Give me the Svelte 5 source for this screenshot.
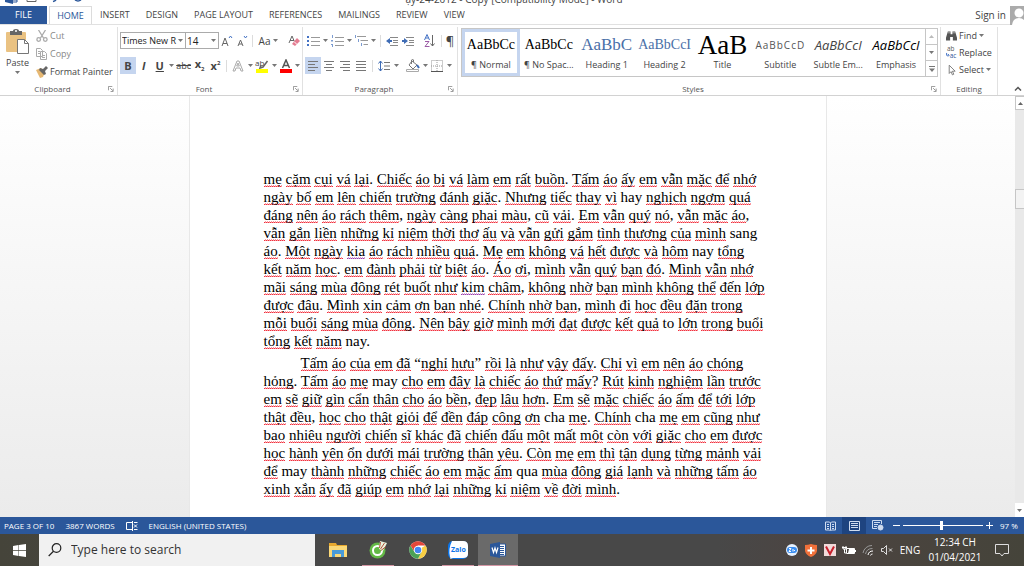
<script>
	const tabs = [
		'INSERT',
		'DESIGN',
		'PAGE LAYOUT',
		'REFERENCES',
		'MAILINGS',
		'REVIEW',
		'VIEW'
	];

	const styles = [
		{ name: '¶ Normal', sample: 'AaBbCc', kind: 'serif' },
		{ name: '¶ No Spac...', sample: 'AaBbCc', kind: 'serif' },
		{ name: 'Heading 1', sample: 'AaBbC', kind: 'heading-one' },
		{ name: 'Heading 2', sample: 'AaBbCcI', kind: 'heading-two' },
		{ name: 'Title', sample: 'AaB', kind: 'title' },
		{ name: 'Subtitle', sample: 'AaBbCcD', kind: 'subtitle' },
		{ name: 'Subtle Em...', sample: 'AaBbCcI', kind: 'subtle' },
		{ name: 'Emphasis', sample: 'AaBbCcI', kind: 'emphasis' }
	];

	const paragraphs = [
		[
			'mẹ cặm cụi vá lại. Chiếc áo bị vá làm em rất buồn. Tấm áo ấy em vẫn mặc để nhớ',
			'ngày bố em lên chiến trường đánh giặc. Nhưng tiếc thay vì hay nghịch ngợm quá',
			'đáng nên áo rách thêm, ngày càng phai màu, cũ vải. Em vẫn quý nó, vẫn mặc áo,',
			'vẫn gắn liền những kỉ niệm thời thơ ấu và vẫn gửi gắm tình thương của mình sang',
			'áo. Một ngày kia áo rách nhiều quá. Mẹ em không vá hết được và hôm nay tổng',
			'kết năm học. em đành phải từ biệt áo. Áo ơi, mình vẫn quý bạn đó. Mình vẫn nhớ',
			'mãi sáng mùa đông rét buốt như kim châm, không nhờ bạn mình không thể đến lớp',
			'được đâu. Mình xin cảm ơn bạn nhé. Chính nhờ bạn, mình đi học đều đặn trong',
			'mỗi buổi sáng mùa đông. Nên bây giờ mình mới đạt được kết quả to lớn trong buổi',
			'tổng kết năm nay.'
		],
		[
			'Tấm áo của em đã “nghỉ hưu” rồi là như vậy đấy. Chỉ vì em nên áo chóng',
			'hỏng. Tấm áo mẹ may cho em đây là chiếc áo thứ mấy? Rút kinh nghiệm lần trước',
			'em sẽ giữ gìn cẩn thân cho áo bền, đẹp lâu hơn. Em sẽ mặc chiếc áo ấm để tới lớp',
			'thật đều, học cho thật giỏi để đền đáp công ơn cha mẹ. Chính cha mẹ em cũng như',
			'bao nhiêu người chiến sĩ khác đã chiến đấu một mất một còn với giặc cho em được',
			'học hành yên ổn dưới mái trường thân yêu. Còn mẹ em thì tận dụng từng mảnh vải',
			'để may thành những chiếc áo em mặc ấm qua mùa đông giá lạnh và những tấm áo',
			'xinh xắn ấy đã giúp em nhớ lại những kỉ niệm về đời mình.'
		]
	];

	// words the spelling checker accepts
	const known = ['hay', 'sang', 'nay', 'to', 'may', 'cha', 'qua'];

	// split a line in words and the punctuation and spaces between them
	const getParts = (line) =>
		line.split(/([\p{L}]+)/u).map((text) => ({
			text,
			wrong: /\p{L}/u.test(text) && !known.includes(text),
			grammar: text === 'kia' || text === 'kim'
		}));

	let selectedStyle = $state('¶ Normal');
	let fontName = $state('Times New R');
	let fontSize = $state('14');
	let search = $state('');
	let zoom = $state(97);
</script>

{#snippet arrow()}
	<svg class="arrow" width="5" height="3" viewBox="0 0 5 3"><path d="M0 0h5L2.5 3z" fill="#777" /></svg>
{/snippet}

{#snippet launcher()}
	<button class="launcher" aria-label="More options">
		<svg width="6" height="6" viewBox="0 0 7 7" fill="none" stroke="#888">
			<path d="M.5 5V.5H5M2.5 2.5l3 3M6 3v3.500H3" />
		</svg>
	</button>
{/snippet}

{#snippet lines(list, color = '#777')}
	{#each list as [x, width], i}
		<rect {x} y={1 + i * 3} {width} height="1" fill={color} />
	{/each}
{/snippet}

<div class="window">
	<header class="titlebar">
		<svg class="quick" width="90" height="6" viewBox="0 0 90 6" fill="none">
			<path d="M5 0h8v4l-8-2z" fill="#2b579a" />
			<path d="M13 0h4v2h-4" stroke="#2b579a" />
			<path d="M27 0v1.500h9V0" stroke="#666" />
			<path d="M56 0q-1 1-3 1.500" stroke="#2b579a" stroke-width="1.500" />
			<path d="M75 0q3 2 6 0" stroke="#2b579a" stroke-width="1.500" />
		</svg>
		<div class="document-name">ậy-24-2012 - Copy [Compatibility Mode] - Word</div>
	</header>

	<nav class="tabs">
		<button class="file">FILE</button>
		<button class="tab active">HOME</button>
		{#each tabs as tab}
			<button class="tab">{tab}</button>
		{/each}
		<a class="sign-in" href="#account">Sign in</a>
		<svg width="14" height="19" viewBox="0 0 14 19">
			<rect width="14" height="19" fill="#ababab" />
			<circle cx="9" cy="7" r="4.500" fill="#fff" />
			<path d="M2 19q1-7 7-7t7 7z" fill="#fff" />
		</svg>
	</nav>

	<div class="ribbon">
		<section class="group clipboard">
			<div class="tools">
				<button class="paste">
					<svg width="24" height="26" viewBox="0 0 24 26">
						<rect x="0" y="3" width="20" height="20" rx="1" fill="#eac282" />
						<path d="M4 2h3q0-2 3-2t3 2h3v4H4z" fill="#666" />
						<circle cx="10" cy="2" r="1" fill="#fff" />
						<path d="M11.500 10.500h7l4 4v10h-11z" fill="#fff" stroke="#777" />
						<path d="M18.500 10.500v4h4" fill="none" stroke="#777" />
					</svg>
					<span>Paste</span>
					{@render arrow()}
				</button>
				<div class="stack">
					<button class="faded">
						<svg width="12" height="12" viewBox="0 0 12 12" fill="none" stroke="#aaa" stroke-width="1.300">
							<path d="M2.500 0l5 8M9.500 0l-5 8" />
							<circle cx="2.700" cy="9.500" r="1.800" />
							<circle cx="9.300" cy="9.500" r="1.800" />
						</svg>
						Cut
					</button>
					<button class="faded">
						<svg width="12" height="12" viewBox="0 0 12 12" fill="#fff" stroke="#aaa">
							<path d="M.5.5h4l2 2v6h-6zM4.500 3.500h4l2 2v6h-6z" />
							<path d="M2 3.500h2M2 5.500h2M6 7.500h3M6 9.500h3" />
						</svg>
						Copy
					</button>
					<button>
						<svg width="12" height="12" viewBox="0 0 12 12">
							<path d="M0 4l5-2 4 4-2 5-3 1z" fill="#e6b873" />
							<path d="M4 2l3 1 3-3 2 2-3 3 1 3-2 1-5-5z" fill="#666" />
						</svg>
						Format Painter
					</button>
				</div>
			</div>
			<h2>Clipboard {@render launcher()}</h2>
		</section>

		<section class="group font">
			<div class="tools rows">
				<div class="row">
					<div class="combo name">
						<input aria-label="Font" bind:value={fontName} />
						{@render arrow()}
					</div>
					<div class="combo size">
						<input aria-label="Font size" bind:value={fontSize} />
						{@render arrow()}
					</div>
					<button class="tool" aria-label="Grow font">
						<svg width="12" height="12" viewBox="0 0 12 12" fill="none" stroke="#666">
							<path d="M1 11l3-8 3 8M2 8.500h4" /><path d="M8 3l1.500-2L11 3" stroke="#4472c4" />
						</svg>
					</button>
					<button class="tool" aria-label="Shrink font">
						<svg width="12" height="12" viewBox="0 0 12 12" fill="none" stroke="#666">
							<path d="M2 11l2.500-6L7 11M3 9h3" /><path d="M8 1l1.500 2L11 1" stroke="#4472c4" />
						</svg>
					</button>
					<i class="divider"></i>
					<button class="tool wide">Aa {@render arrow()}</button>
					<button class="tool" aria-label="Clear formatting">
						<svg width="13" height="12" viewBox="0 0 13 12">
							<path d="M1 8l3-7 3 7M2 5.500h4" fill="none" stroke="#666" />
							<path d="M9 3l3 3-5 5-3-2z" fill="#e47c91" />
							<path d="M6 6.500l3 3" stroke="#fff" />
						</svg>
					</button>
				</div>
				<div class="row">
					<button class="tool on"><b>B</b></button>
					<button class="tool"><em>I</em></button>
					<button class="tool"><u>U</u></button>
					<button class="drop" aria-label="Underline styles">{@render arrow()}</button>
					<button class="tool"><s>abc</s></button>
					<button class="tool"><b>x<sub>2</sub></b></button>
					<button class="tool"><b>x<sup>2</sup></b></button>
					<i class="divider"></i>
					<button class="tool" aria-label="Text effects">
						<svg width="12" height="12" viewBox="0 0 12 12" fill="#fff" stroke="#aaa">
							<path d="M1 11l4-10h2l4 10H9L8 8H4l-1 3zM4.700 6h2.600L6 3z" />
						</svg>
					</button>
					<button class="drop" aria-label="Text effects list">{@render arrow()}</button>
					<button class="tool" aria-label="Highlight">
						<svg width="14" height="14" viewBox="0 0 14 14">
							<text x="0" y="7" font-size="8" fill="#444">ab</text>
							<path d="M12.500 2L8 8l-3 1 1-3" fill="none" stroke="#666" stroke-width="1.500" />
							<rect x="1" y="10" width="12" height="4" fill="#ff0" />
						</svg>
					</button>
					<button class="drop" aria-label="Highlight colours">{@render arrow()}</button>
					<button class="tool" aria-label="Font colour">
						<svg width="14" height="14" viewBox="0 0 14 14">
							<path d="M3.500 9L7 1l3.500 8M5 6.500h4" fill="none" stroke="#555" stroke-width="1.500" />
							<rect x="1" y="10" width="12" height="4" fill="#f00" />
						</svg>
					</button>
					<button class="drop" aria-label="Font colours">{@render arrow()}</button>
				</div>
			</div>
			<h2>Font {@render launcher()}</h2>
		</section>

		<section class="group paragraph">
			<div class="tools rows">
				<div class="row">
					<button class="tool" aria-label="Bullets">
						<svg width="13" height="12" viewBox="0 0 13 12">
							<path d="M0 1h2v2H0zM0 5h2v2H0zM0 9h2v2H0z" fill="#4472c4" />
							<path d="M4 2.500h9M4 6.500h9M4 10.500h9" stroke="#999" />
						</svg>
					</button>
					<button class="drop" aria-label="Bullet list">{@render arrow()}</button>
					<button class="tool" aria-label="Numbering">
						<svg width="13" height="12" viewBox="0 0 13 12">
							<path d="M1.500 0v3M0 5.500h2M1 5v2M0 9.500h2M1.500 9v3" stroke="#7b9bd1" />
							<path d="M4 2.500h9M4 6.500h9M4 10.500h9" stroke="#999" />
						</svg>
					</button>
					<button class="drop" aria-label="Numbering list">{@render arrow()}</button>
					<button class="tool" aria-label="Multilevel list">
						<svg width="13" height="12" viewBox="0 0 13 12">
							<path d="M.5 0v3M3.500 4v3M6.500 8v3" stroke="#7b9bd1" />
							<path d="M2 1.500h9M5.500 5.500H13M8.500 9.500H13" stroke="#999" />
						</svg>
					</button>
					<button class="drop" aria-label="Multilevel lists">{@render arrow()}</button>
					<i class="divider"></i>
					<button class="tool" aria-label="Decrease indent">
						<svg width="12" height="10" viewBox="0 0 12 10">
							<path d="M0 5l4-3v2h2v2H4v2z" fill="#3f6cb5" />
							<path d="M4 1.500h8M7 4.500h5M7 6.500h5M4 9.500h8" stroke="#888" />
						</svg>
					</button>
					<button class="tool" aria-label="Increase indent">
						<svg width="12" height="10" viewBox="0 0 12 10">
							<path d="M6 5L2 2v2H0v2h2v2z" fill="#3f6cb5" />
							<path d="M4 1.500h8M7 4.500h5M7 6.500h5M4 9.500h8" stroke="#888" />
						</svg>
					</button>
					<button class="tool sort" aria-label="Sort">
						<svg width="11" height="13" viewBox="0 0 11 13" fill="none">
							<path d="M.5 6L3 .5 5.500 6M1.500 4h3" stroke="#4472c4" />
							<path d="M1 7.500h4l-4 5h4.500" stroke="#9b5aa5" />
							<path d="M8.500 1v11M6.500 9.500l2 2.500 2-2.500" stroke="#666" />
						</svg>
					</button>
					<i class="divider"></i>
					<button class="tool mark">¶</button>
				</div>
				<div class="row">
					<button class="tool on" aria-label="Align left">
						<svg width="10" height="12" viewBox="0 0 10 12">{@render lines([[0, 10], [0, 7], [0, 10], [0, 7]])}</svg>
					</button>
					<button class="tool" aria-label="Center">
						<svg width="10" height="12" viewBox="0 0 10 12">{@render lines([[0, 10], [2, 6], [0, 10], [2, 6]])}</svg>
					</button>
					<button class="tool" aria-label="Align right">
						<svg width="10" height="12" viewBox="0 0 10 12">{@render lines([[0, 10], [3, 7], [0, 10], [3, 7]])}</svg>
					</button>
					<button class="tool" aria-label="Justify">
						<svg width="10" height="12" viewBox="0 0 10 12">{@render lines([[0, 10], [0, 10], [0, 10], [0, 10]])}</svg>
					</button>
					<i class="divider"></i>
					<button class="tool" aria-label="Line spacing">
						<svg width="12" height="12" viewBox="0 0 12 12">
							<path d="M2.500 1v10M.5 3.500l2-2.500 2 2.500M.5 8.500l2 2.500 2-2.500" fill="none" stroke="#3f6cb5" />
							<path d="M6 2.500h6M6 6h6M6 9.500h6" stroke="#777" />
						</svg>
					</button>
					<button class="drop" aria-label="Line spacing list">{@render arrow()}</button>
					<button class="tool shading" aria-label="Shading">
						<svg width="14" height="13" viewBox="0 0 14 13" fill="#fff" stroke="#777">
							<path d="M6 2l5 4-4 4-4-4zM5.500 5V1q1.500-1.500 2 0v2" />
							<path d="M11 6l2 3" stroke="#3f6cb5" stroke-width="2" />
							<path d="M.5 10.500h12v2H.5z" stroke="#aaa" />
						</svg>
					</button>
					<button class="drop" aria-label="Shading colours">{@render arrow()}</button>
					<button class="tool" aria-label="Borders">
						<svg width="12" height="12" viewBox="0 0 12 12" fill="none" stroke="#999">
							<path d="M.5.500h11v11H.5zM6 0v12M0 6h12" stroke-dasharray="1 1" /><path d="M0 11.500h12" stroke="#555" />
						</svg>
					</button>
					<button class="drop" aria-label="Border list">{@render arrow()}</button>
				</div>
			</div>
			<h2>Paragraph {@render launcher()}</h2>
		</section>

		<section class="group styles">
			<div class="tools">
				<div class="gallery">
					{#each styles as style}
						<button
							class="style"
							class:selected={selectedStyle === style.name}
							onclick={() => (selectedStyle = style.name)}
						>
							<span class="sample {style.kind}">{style.sample}</span>
							<span class="style-name">{style.name}</span>
						</button>
					{/each}
					<div class="gallery-scroll">
						<button aria-label="Previous row">
							<svg width="5" height="3" viewBox="0 0 5 3"><path d="M0 3h5L2.500 0z" fill="#bbb" /></svg>
						</button>
						<button aria-label="Next row">{@render arrow()}</button>
						<button aria-label="All styles">
							<svg width="6" height="6" viewBox="0 0 6 6"><path d="M0 0h6v1H0zM0 2.500h6L3 6z" fill="#777" /></svg>
						</button>
					</div>
				</div>
			</div>
			<h2>Styles {@render launcher()}</h2>
		</section>

		<section class="group editing">
			<div class="tools stack">
				<button>
					<svg width="11" height="12" viewBox="0 0 12 12" fill="#555">
						<path d="M2 1h3v3h2V1h3l2 7v3H7.500V7h-3v4H0V8z" /><path d="M2 2.500h3M7 2.500h3" stroke="#fff" stroke-width=".5" />
					</svg>
					Find {@render arrow()}
				</button>
				<button>
					<svg width="11" height="13" viewBox="0 0 12 13">
						<text x="1" y="5" font-size="7" fill="#555">ab</text>
						<text x="4" y="12" font-size="7" fill="#2b579a">ac</text>
						<path d="M.5 7v2.500H3M2 8l1.500 1.500L2 11" fill="none" stroke="#4472c4" />
					</svg>
					Replace
				</button>
				<button>
					<svg width="11" height="12" viewBox="0 0 12 12" fill="#fff" stroke="#777">
						<path d="M3.500.8v9l2-2 1.500 3.500 1.500-.700L7 7.300h3z" />
					</svg>
					Select {@render arrow()}
				</button>
			</div>
			<h2>Editing</h2>
		</section>

		<button class="collapse" aria-label="Collapse the ribbon">
			<svg width="8" height="5" viewBox="0 0 8 5"><path d="M1 4.500l3-3 3 3" fill="none" stroke="#555" stroke-width="1.500" /></svg>
		</button>
	</div>

	<main class="canvas">
		<article class="page">
			{#each paragraphs as paragraph, i}
				<p class:indent={i > 0}>
					{#each paragraph as line}
						<span class="line">
							{#each getParts(line) as part}<span class:wrong={part.wrong} class:grammar={part.grammar}>{part.text}</span>{/each}
						</span>
					{/each}
				</p>
			{/each}
		</article>
		<div class="scrollbar">
			<button aria-label="Scroll up">
				<svg width="5" height="3" viewBox="0 0 5 3"><path d="M0 3h5L2.500 0z" fill="#666" /></svg>
			</button>
			<div class="thumb"></div>
			<button aria-label="Scroll down">{@render arrow()}</button>
		</div>
	</main>

	<footer class="status">
		<span>PAGE 3 OF 10</span>
		<span>3867 WORDS</span>
		<svg width="12" height="10" viewBox="0 0 12 10" fill="none" stroke="#fff">
			<path d="M6.500 1.500h-6v7h6M6.500 0v10M8 1.500h3.500M8 8.500h3.500M8 3.500l3 3M11 3.500l-3 3" />
		</svg>
		<span>ENGLISH (UNITED STATES)</span>
		<div class="views">
			<button aria-label="Read mode">
				<svg width="11" height="10" viewBox="0 0 11 10" fill="none" stroke="#cfdcf0">
					<path d="M.5 1h4l1 1 1-1h4v8h-4l-1 1-1-1h-4zM5.500 2v7M2 3.500h2M2 5.500h2M2 7.500h2M7 3.500h2M7 5.500h2M7 7.500h2" />
				</svg>
			</button>
			<button class="current" aria-label="Print layout">
				<svg width="11" height="10" viewBox="0 0 11 10" fill="none" stroke="#cfdcf0">
					<path d="M.5.500h10v9H.5zM2 2.500h7M2 4.500h7M2 6.500h7" />
				</svg>
			</button>
			<button aria-label="Web layout">
				<svg width="12" height="11" viewBox="0 0 12 11" fill="none" stroke="#cfdcf0">
					<path d="M5 8.500H.5v-8h9V4M2 2.500h6M2 4.500h4M2 6.500h3" /><circle cx="8.500" cy="7.500" r="2.500" fill="#cfdcf0" />
				</svg>
			</button>
		</div>
		<button class="step" aria-label="Zoom out"><svg width="7" height="7" viewBox="0 0 7 7"><path d="M0 3h7v1H0z" fill="#fff" /></svg></button>
		<input type="range" min="10" max="190" aria-label="Zoom" bind:value={zoom} />
		<button class="step" aria-label="Zoom in"><svg width="7" height="7" viewBox="0 0 7 7"><path d="M0 3h7v1H0zM3 0h1v7H3z" fill="#fff" /></svg></button>
		<span class="percent">{zoom} %</span>
	</footer>

	<footer class="taskbar">
		<button class="start" aria-label="Start">
			<svg width="13" height="13" viewBox="0 0 13 13" fill="#fff">
				<path d="M0 2l5.500-1v5H0zM6 1l7-1v6H6zM0 6.700h5.500V12L0 11zM6 6.700h7V13l-7-1z" />
			</svg>
		</button>
		<label class="search">
			<svg width="14" height="14" viewBox="0 0 14 14" fill="none" stroke="#222" stroke-width="1.200">
				<circle cx="8.500" cy="5" r="4.300" /><path d="M5.500 8.300L.7 13" />
			</svg>
			<input type="text" aria-label="Search" placeholder="Type here to search" bind:value={search} />
		</label>
		<button class="app" aria-label="File Explorer">
			<svg width="18" height="16" viewBox="0 0 18 16">
				<path d="M0 1h7l1 2h10v12H0z" fill="#e8a92f" />
				<path d="M0 4h18v11H0z" fill="#fbd978" />
				<path d="M3 8h12v7h-3v-3H6v3H3z" fill="#4a9bd8" />
			</svg>
		</button>
		<button class="app running" aria-label="Coc Coc">
			<svg width="18" height="18" viewBox="0 0 18 18">
				<circle cx="8.500" cy="9.500" r="8" fill="#63b846" />
				<circle cx="8.500" cy="9.500" r="4.500" fill="none" stroke="#fff" stroke-width="2" />
				<path d="M10 8l1-8 7 2-4 8z" fill="#e9f3de" />
				<path d="M10.500 7l1-6M11.500 8l4-6M12 9.500l5-4" stroke="#b5533e" />
				<circle cx="8.500" cy="9.500" r="2" fill="#63b846" />
			</svg>
		</button>
		<button class="app" aria-label="Chrome">
			<svg width="18" height="18" viewBox="0 0 18 18">
				<circle cx="9" cy="9" r="8.700" fill="#fff" />
				<path d="M9 9l7.500-4.400A8.700 8.700 0 0 1 9 17.700L12.500 11z" fill="#f8ce43" />
				<path d="M9 9l3.500 2L9 17.700A8.700 8.700 0 0 1 1.500 4.600L5.500 11z" fill="#4ba157" />
				<path d="M9 4.600h7.500A8.700 8.700 0 0 0 1.500 4.600L5 10z" fill="#e2473a" />
				<circle cx="9" cy="9" r="4.200" fill="#fff" /><circle cx="9" cy="9" r="3.300" fill="#4285f4" />
			</svg>
		</button>
		<button class="app running" aria-label="Zalo">
			<svg width="20" height="18" viewBox="0 0 20 18">
				<rect width="20" height="18" rx="5" fill="#0b74e8" /><path d="M4 0h11q5 0 5 5v8q0 4-5 4H5l-3 1q1-1 0-2-2-8 2-16z" fill="#fff" />
				<text x="3" y="11" font-size="7" font-weight="700" fill="#0b74e8">Zalo</text>
			</svg>
		</button>
		<button class="app running front" aria-label="Word">
			<svg width="16" height="16" viewBox="0 0 16 16">
				<path d="M8 2h7.500v12H8z" fill="#fff" stroke="#2b579a" /><path d="M9 4.500h5M9 6.500h5M9 8.500h5M9 10.500h5M9 12.500h5" stroke="#2b579a" />
				<path d="M0 2l10-2v16L0 14z" fill="#2b579a" />
				<path d="M2 5.500l1.500 5L5 6l1.500 4.500L8 5.500" fill="none" stroke="#fff" stroke-width="1.200" />
			</svg>
		</button>
		<div class="tray">
			<button aria-label="Zalo">
				<svg width="12" height="12" viewBox="0 0 12 12">
					<circle cx="6" cy="6" r="6" fill="#e6f1ff" /><rect x="1" y="3" width="10" height="6" rx="3" fill="#3a8df0" />
					<path d="M3 4.500h2l-2 3h2M7 5v2.500M8.500 6v1" fill="none" stroke="#fff" />
				</svg>
			</button>
			<button aria-label="Protection">
				<svg width="12" height="13" viewBox="0 0 12 13">
					<path d="M0 1q3 0 6-1 3 1 6 1v6q-1 4-6 6-5-2-6-6z" fill="#f0703a" /><path d="M6 3v7M2.500 6.500h7" stroke="#fff" stroke-width="2" />
				</svg>
			</button>
			<button aria-label="Unikey">
				<svg width="12" height="12" viewBox="0 0 12 12">
					<rect width="12" height="12" fill="#f2dada" /><path d="M2 2.500l4 7.500 4-7.500" fill="none" stroke="#c8202c" stroke-width="2" />
				</svg>
			</button>
			<button aria-label="Battery">
				<svg width="14" height="9" viewBox="0 0 14 9" fill="none" stroke="#fff">
					<path d="M4.500 2.500h8v5h-8zM13.500 4v2" /><path d="M7 3h5v4H6z" fill="#fff" stroke="none" /><path d="M1 0v3h3V0M2.500 3v4H4M0 1.500h5" />
				</svg>
			</button>
			<button aria-label="Network">
				<svg width="12" height="12" viewBox="0 0 12 12" fill="none" stroke="#999">
					<path d="M1 9A9 9 0 0 1 10 1.500M3.500 10A7 7 0 0 1 10.500 4.500" /><path d="M6 11a5 5 0 0 1 5-4M8.500 11.500a2 2 0 0 1 2-1.500" stroke="#fff" />
				</svg>
			</button>
			<button aria-label="Volume">
				<svg width="12" height="10" viewBox="0 0 12 10" fill="none" stroke="#ddd"><path d="M.5 3.500h2l3-3v9l-3-3h-2zM8 3.500l3 3M11 3.500l-3 3" /></svg>
			</button>
			<button class="language">ENG</button>
			<button class="clock"><span>12:34 CH</span><span>01/04/2021</span></button>
			<button class="notice" aria-label="Notifications">
				<svg width="14" height="13" viewBox="0 0 14 13" fill="none" stroke="#ddd"><path d="M.5.500h13v9H9l-2 2.500-2-2.500H.5z" /></svg>
			</button>
		</div>
	</footer>
</div>

<style>
	:global(body) {
		margin: 0;
		background: #fff;
	}

	.window {
		display: flex;
		flex-direction: column;
		height: 100vh;
		overflow: hidden;
		font-family: 'Open Sans', 'Noto Sans', sans-serif;
		font-size: 9px;
		line-height: 12px;
		color: #444;
	}

	button {
		display: flex;
		align-items: center;
		justify-content: center;
		padding: 0;
		border: none;
		background: none;
		font: inherit;
		color: inherit;
		white-space: nowrap;
	}

	input {
		min-width: 0;
		padding: 0;
		border: none;
		background: none;
		font: inherit;
		color: inherit;
		outline: none;
	}

	svg {
		display: block;
		flex: none;
	}

	.titlebar {
		display: flex;
		align-items: flex-end;
		height: 6px;
		overflow: hidden;
		font-size: 10px;
	}

	.document-name {
		flex: 1;
		padding-bottom: 1px;
		padding-right: 86px;
		text-align: center;
	}

	.tabs {
		display: flex;
		height: 19px;
		border-bottom: 1px solid #e1e1e1;
		box-sizing: border-box;
	}

	.file {
		width: 47px;
		margin-right: 2px;
		background: #2b579a;
		color: #fff;
	}

	.tab {
		padding: 0 8px;
	}

	.tab.active {
		width: 43px;
		padding: 0;
		border: 1px solid #dcdcdc;
		border-bottom: none;
		color: #2b579a;
	}

	.sign-in {
		margin-left: auto;
		padding: 3px 4px 0 0;
		font-size: 10px;
		color: #444;
		text-decoration: none;
	}

	.ribbon {
		display: flex;
		height: 71px;
		padding-top: 2px;
		box-sizing: border-box;
		border-bottom: 1px solid #d2d2d2;
	}

	.group {
		display: flex;
		flex-direction: column;
		flex: none;
		justify-content: space-between;
		border-right: 1px solid #e1e1e1;
		box-sizing: border-box;
	}

	.clipboard {
		width: 118px;
	}

	.font {
		width: 185px;
	}

	.paragraph {
		width: 155px;
	}

	.styles {
		flex: 1;
		min-width: 0;
	}

	.editing {
		width: 57px;
	}

	h2 {
		display: grid;
		grid-template-columns: 1fr 12px;
		justify-items: center;
		align-items: center;
		margin: 0;
		font-size: 8px;
		font-weight: 400;
		color: #555;
	}

	.editing h2 {
		grid-template-columns: 1fr;
	}

	.tools {
		display: flex;
	}

	.paste {
		flex-direction: column;
		justify-content: flex-start;
		gap: 2px;
		width: 35px;
		padding-top: 2px;
	}

	.stack {
		display: flex;
		flex-direction: column;
	}

	.stack button {
		justify-content: flex-start;
		gap: 2px;
		height: 18px;
		padding-left: 1px;
	}

	.editing .tools button {
		height: 17px;
		padding-left: 5px;
	}

	.stack .faded {
		color: #888;
	}

	.rows {
		flex-direction: column;
		gap: 8px;
		padding: 5px 0 0 2px;
	}

	.row {
		display: flex;
		align-items: center;
		height: 17px;
	}

	.tool {
		width: 16px;
		height: 17px;
	}

	.tool.on {
		background: #c5d5ef;
	}

	.tool.wide {
		gap: 3px;
		width: 26px;
		margin-right: 6px;
		font-size: 10px;
	}

	.tool.sort {
		width: 22px;
		padding-left: 4px;
	}

	.tool.mark {
		width: 10px;
		font-size: 13px;
	}

	.tool.shading {
		margin-left: 5px;
	}

	.tool b,
	.tool em,
	.tool u {
		font-size: 11px;
		font-weight: 700;
	}

	.tool sub,
	.tool sup {
		font-size: 6px;
		line-height: 6px;
	}

	.drop {
		width: 8px;
		height: 17px;
	}

	.divider {
		width: 1px;
		height: 12px;
		margin: 0 3px;
		background: #dcdcdc;
	}

	.combo {
		display: flex;
		align-items: center;
		width: 66px;
		height: 17px;
		padding: 0 2px 0 1px;
		box-sizing: border-box;
		border: 1px solid #ababab;
		color: #222;
	}

	.combo.size {
		width: 34px;
		margin-left: -1px;
		font-size: 10px;
	}

	.combo input {
		flex: 1;
	}

	.gallery {
		display: flex;
		flex: 1;
		min-width: 0;
		height: 49px;
		margin: 1px 2px 0 3px;
		box-sizing: border-box;
		border: 1px solid #c6c6c6;
	}

	.style {
		flex: 1;
		flex-direction: column;
		justify-content: flex-end;
		min-width: 0;
		border: 3px solid transparent;
	}

	.style.selected {
		border-color: #c5d5ef;
	}

	.sample {
		display: flex;
		align-items: center;
		justify-content: center;
		width: 100%;
		height: 26px;
		font-size: 14px;
		line-height: 24px;
		color: #000;
	}

	.serif,
	.heading-one,
	.heading-two,
	.title {
		font-family: 'Liberation Serif', serif;
	}

	.heading-one {
		font-size: 17px;
		color: #4a6fa8;
	}

	.heading-two {
		color: #4a6fa8;
	}

	.title {
		font-size: 27px;
	}

	.subtitle {
		font-size: 10px;
		letter-spacing: 1px;
		color: #555;
	}

	.subtle,
	.emphasis {
		font-size: 13px;
		font-style: italic;
	}

	.subtle {
		color: #444;
	}

	.style-name {
		height: 15px;
		line-height: 14px;
	}

	.gallery-scroll {
		display: flex;
		flex-direction: column;
		flex: none;
		width: 11px;
		border-left: 1px solid #c6c6c6;
	}

	.gallery-scroll button {
		flex: 1;
	}

	.gallery-scroll button + button {
		border-top: 1px solid #c6c6c6;
	}

	.collapse {
		flex: none;
		align-self: flex-end;
		width: 26px;
		height: 14px;
		padding-left: 14px;
		box-sizing: border-box;
	}

	.canvas {
		display: flex;
		flex: 1;
		min-height: 0;
		background: linear-gradient(#fff, #ebebeb);
	}

	.page {
		width: 638px;
		margin: 0 auto;
		padding: 74px 0 0 74px;
		box-sizing: border-box;
		overflow: hidden;
		border: solid #e8e8e8;
		border-width: 0 1px;
		background: #fff;
		font-family: 'Liberation Serif', 'Times New Roman', serif;
		font-size: 15px;
		line-height: 18px;
		color: #000;
	}

	p {
		margin: 0 0 4px;
	}

	.indent {
		text-indent: 37px;
	}

	.line {
		display: block;
		white-space: nowrap;
	}

	.line + .line {
		text-indent: 0;
	}

	/* a row of dots on a paler line makes the squiggle */
	.wrong {
		--squiggle: #f0303c;
		--pale: #fa98a0;
		background-image: linear-gradient(90deg, var(--squiggle) 50%, var(--pale) 50%),
			linear-gradient(90deg, transparent 50%, var(--pale) 50%);
		background-position:
			0 100%,
			0 calc(100% - 1px);
		background-size: 2px 1px;
		background-repeat: repeat-x;
	}

	.grammar {
		--squiggle: #9b3fa8;
		--pale: #d0a0d8;
	}

	.scrollbar {
		display: flex;
		flex-direction: column;
		width: 9px;
		background: #e9e9e9;
	}

	.scrollbar button {
		height: 14px;
		border: 1px solid #c6c6c6;
		border-right: none;
		background: #fff;
	}

	.scrollbar button:last-child {
		margin-top: auto;
		border: none;
	}

	.thumb {
		height: 18px;
		margin-top: 79px;
		border: 1px solid #c6c6c6;
		border-right: none;
		background: #f3f3f3;
	}

	.status {
		display: flex;
		align-items: center;
		gap: 11px;
		height: 17px;
		padding: 0 4px;
		background: #2b579a;
		font-size: 8px;
		color: #fff;
	}

	.views {
		display: flex;
		margin-left: auto;
	}

	.views button {
		width: 24px;
		height: 17px;
	}

	.views .current {
		background: #1e4480;
	}

	.status .step {
		margin: 0 -8px;
	}

	.status input {
		width: 80px;
		height: 10px;
		margin: 0;
		appearance: none;
		background: linear-gradient(#fff, #fff) center / 100% 1px no-repeat;
	}

	.status input::-webkit-slider-thumb {
		appearance: none;
		width: 3px;
		height: 9px;
		background: #fff;
	}

	.percent {
		width: 20px;
		padding-left: 4px;
		white-space: nowrap;
	}

	.taskbar {
		display: flex;
		height: 32px;
		background: linear-gradient(90deg, #45443a, #484848 30%, #484848 70%, #4c4441 80%, #45443a);
		font-size: 10px;
	}

	.start {
		width: 39px;
	}

	.search {
		display: flex;
		align-items: center;
		gap: 9px;
		width: 276px;
		margin-right: 3px;
		padding-left: 9px;
		box-sizing: border-box;
		background: #f1f1f1;
		font-size: 12px;
		line-height: 16px;
		color: #333;
	}

	.search input {
		flex: 1;
	}

	.search input::placeholder {
		color: #333;
		opacity: 1;
	}

	.app {
		width: 40px;
	}

	.running {
		background: linear-gradient(#d597a5, #d597a5) bottom / 32px 1px no-repeat;
	}

	.front {
		background-color: #6a6a6a;
		background-size: 100% 1px;
	}

	.tray {
		display: flex;
		align-items: stretch;
		margin-left: auto;
		color: #fff;
	}

	.tray button {
		width: 19px;
	}

	.tray .language {
		width: 28px;
	}

	.tray .clock {
		flex-direction: column;
		width: 62px;
		line-height: 15px;
	}

	.tray .notice {
		width: 38px;
		padding-right: 6px;
	}
</style>
